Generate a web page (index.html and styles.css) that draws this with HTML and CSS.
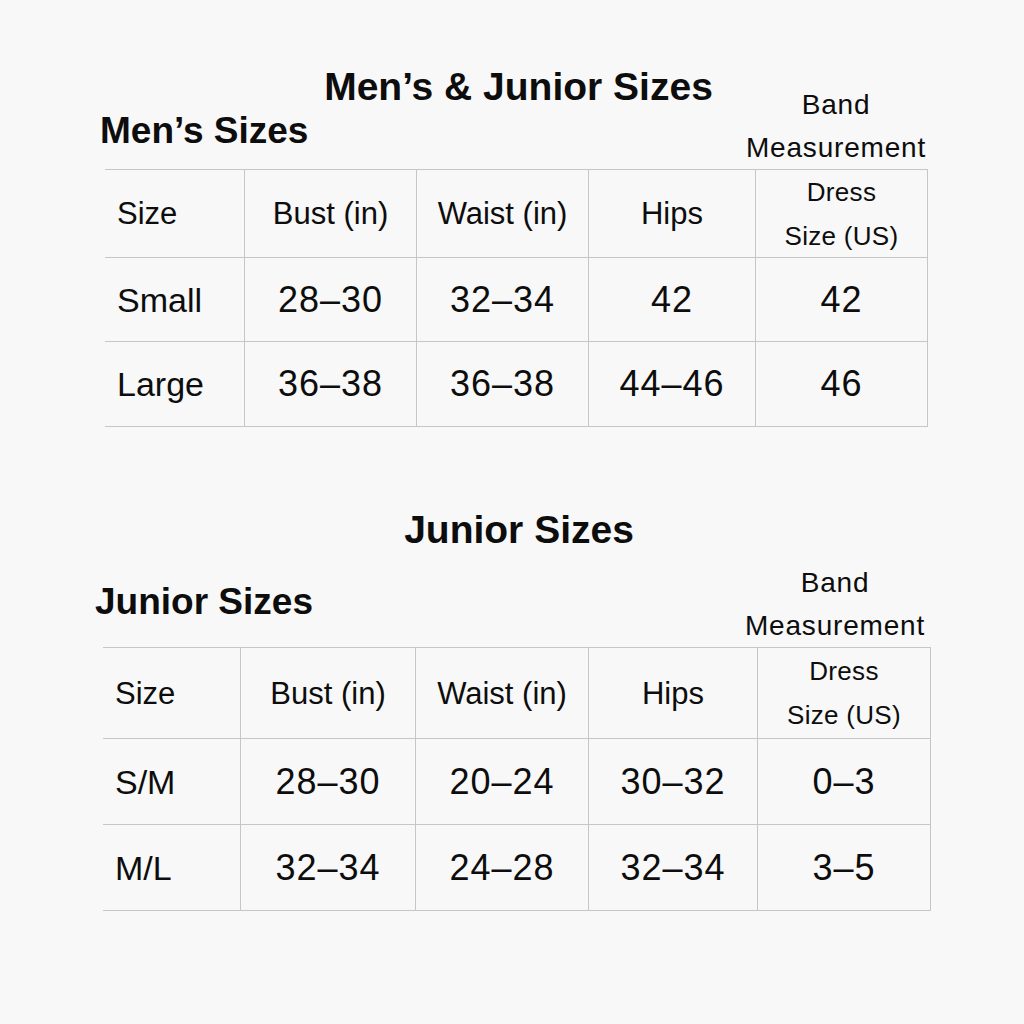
FILE: index.html
```html
<!DOCTYPE html>
<html lang="en">
<head>
<meta charset="utf-8">
<title>Men’s &amp; Junior Sizes</title>
<link rel="stylesheet" href="styles.css">
</head>
<body>
<main class="page">
  <section class="chart chart--men">
    <div class="chart-head">
      <h1 class="chart-title">Men’s &amp; Junior Sizes</h1>
      <h2 class="chart-sub">Men’s Sizes</h2>
      <p class="band">Band<br>Measurement</p>
    </div>
    <div class="grid grid--men">
      <div class="cell head first">Size</div>
      <div class="cell head">Bust (in)</div>
      <div class="cell head">Waist (in)</div>
      <div class="cell head">Hips</div>
      <div class="cell head dress">Dress<br>Size (US)</div>

      <div class="cell first">Small</div>
      <div class="cell num">28–30</div>
      <div class="cell num">32–34</div>
      <div class="cell num">42</div>
      <div class="cell num">42</div>

      <div class="cell first">Large</div>
      <div class="cell num">36–38</div>
      <div class="cell num">36–38</div>
      <div class="cell num">44–46</div>
      <div class="cell num">46</div>
    </div>
  </section>

  <section class="chart chart--junior">
    <div class="chart-head">
      <h1 class="chart-title">Junior Sizes</h1>
      <h2 class="chart-sub">Junior Sizes</h2>
      <p class="band">Band<br>Measurement</p>
    </div>
    <div class="grid grid--junior">
      <div class="cell head first">Size</div>
      <div class="cell head">Bust (in)</div>
      <div class="cell head">Waist (in)</div>
      <div class="cell head">Hips</div>
      <div class="cell head dress">Dress<br>Size (US)</div>

      <div class="cell first">S/M</div>
      <div class="cell num">28–30</div>
      <div class="cell num">20–24</div>
      <div class="cell num">30–32</div>
      <div class="cell num">0–3</div>

      <div class="cell first">M/L</div>
      <div class="cell num">32–34</div>
      <div class="cell num">24–28</div>
      <div class="cell num">32–34</div>
      <div class="cell num">3–5</div>
    </div>
  </section>
</main>
</body>
</html>
```

FILE: styles.css
```css
* { box-sizing: border-box; }

body {
  margin: 0;
  background: #f8f8f8;
  color: #0d0d0d;
  font-family: "Liberation Sans", Arial, Helvetica, sans-serif;
}

.page {
  padding-top: 65px;
  display: flex;
  flex-direction: column;
}

.chart--men {
  margin-left: 105px;
  width: 823px;
}

.chart--junior {
  margin-left: 103px;
  width: 828px;
  margin-top: 81px;
}

.chart-head {
  display: grid;
  grid-template-columns: 1fr auto;
  grid-template-rows: auto auto;
}

.chart-title {
  grid-column: 1 / 3;
  grid-row: 1;
  justify-self: center;
  margin: 0;
  padding-left: 4px;
  font-size: 39px;
  line-height: 44px;
  font-weight: 700;
}

.chart-sub {
  grid-column: 1;
  grid-row: 2;
  align-self: start;
  margin: 0;
  font-size: 37px;
  line-height: 44px;
  font-weight: 700;
}

.chart--men .chart-sub {
  margin-left: -5px;
  padding-bottom: 16px;
}

.chart--junior .chart-sub {
  margin-left: -8px;
  margin-top: 28px;
  padding-bottom: 23px;
}

.band {
  grid-column: 2;
  grid-row: 1 / 3;
  align-self: end;
  width: 184px;
  margin: 0;
  text-align: center;
  font-size: 28px;
  line-height: 43px;
  letter-spacing: 0.8px;
}

.chart--junior .band {
  margin-right: 4px;
}

.grid {
  display: grid;
  border-top: 1px solid #c6c6c6;
}

.grid--men {
  grid-template-columns: 140px 172px 172px 167px 172px;
  grid-template-rows: 88px 84px 85px;
}

.grid--junior {
  grid-template-columns: 138px 175px 173px 169px 173px;
  grid-template-rows: 91px 86px 86px;
}

.cell {
  display: flex;
  align-items: center;
  justify-content: center;
  text-align: center;
  border-right: 1px solid #c6c6c6;
  border-bottom: 1px solid #c6c6c6;
  font-size: 34px;
  line-height: 1;
}

.cell.num {
  font-size: 36px;
  letter-spacing: 1px;
}

.cell.first {
  justify-content: flex-start;
  padding-left: 12px;
}

.cell.head {
  font-size: 31px;
}

.cell.dress {
  font-size: 26px;
  line-height: 44px;
  letter-spacing: 0.3px;
}
```
